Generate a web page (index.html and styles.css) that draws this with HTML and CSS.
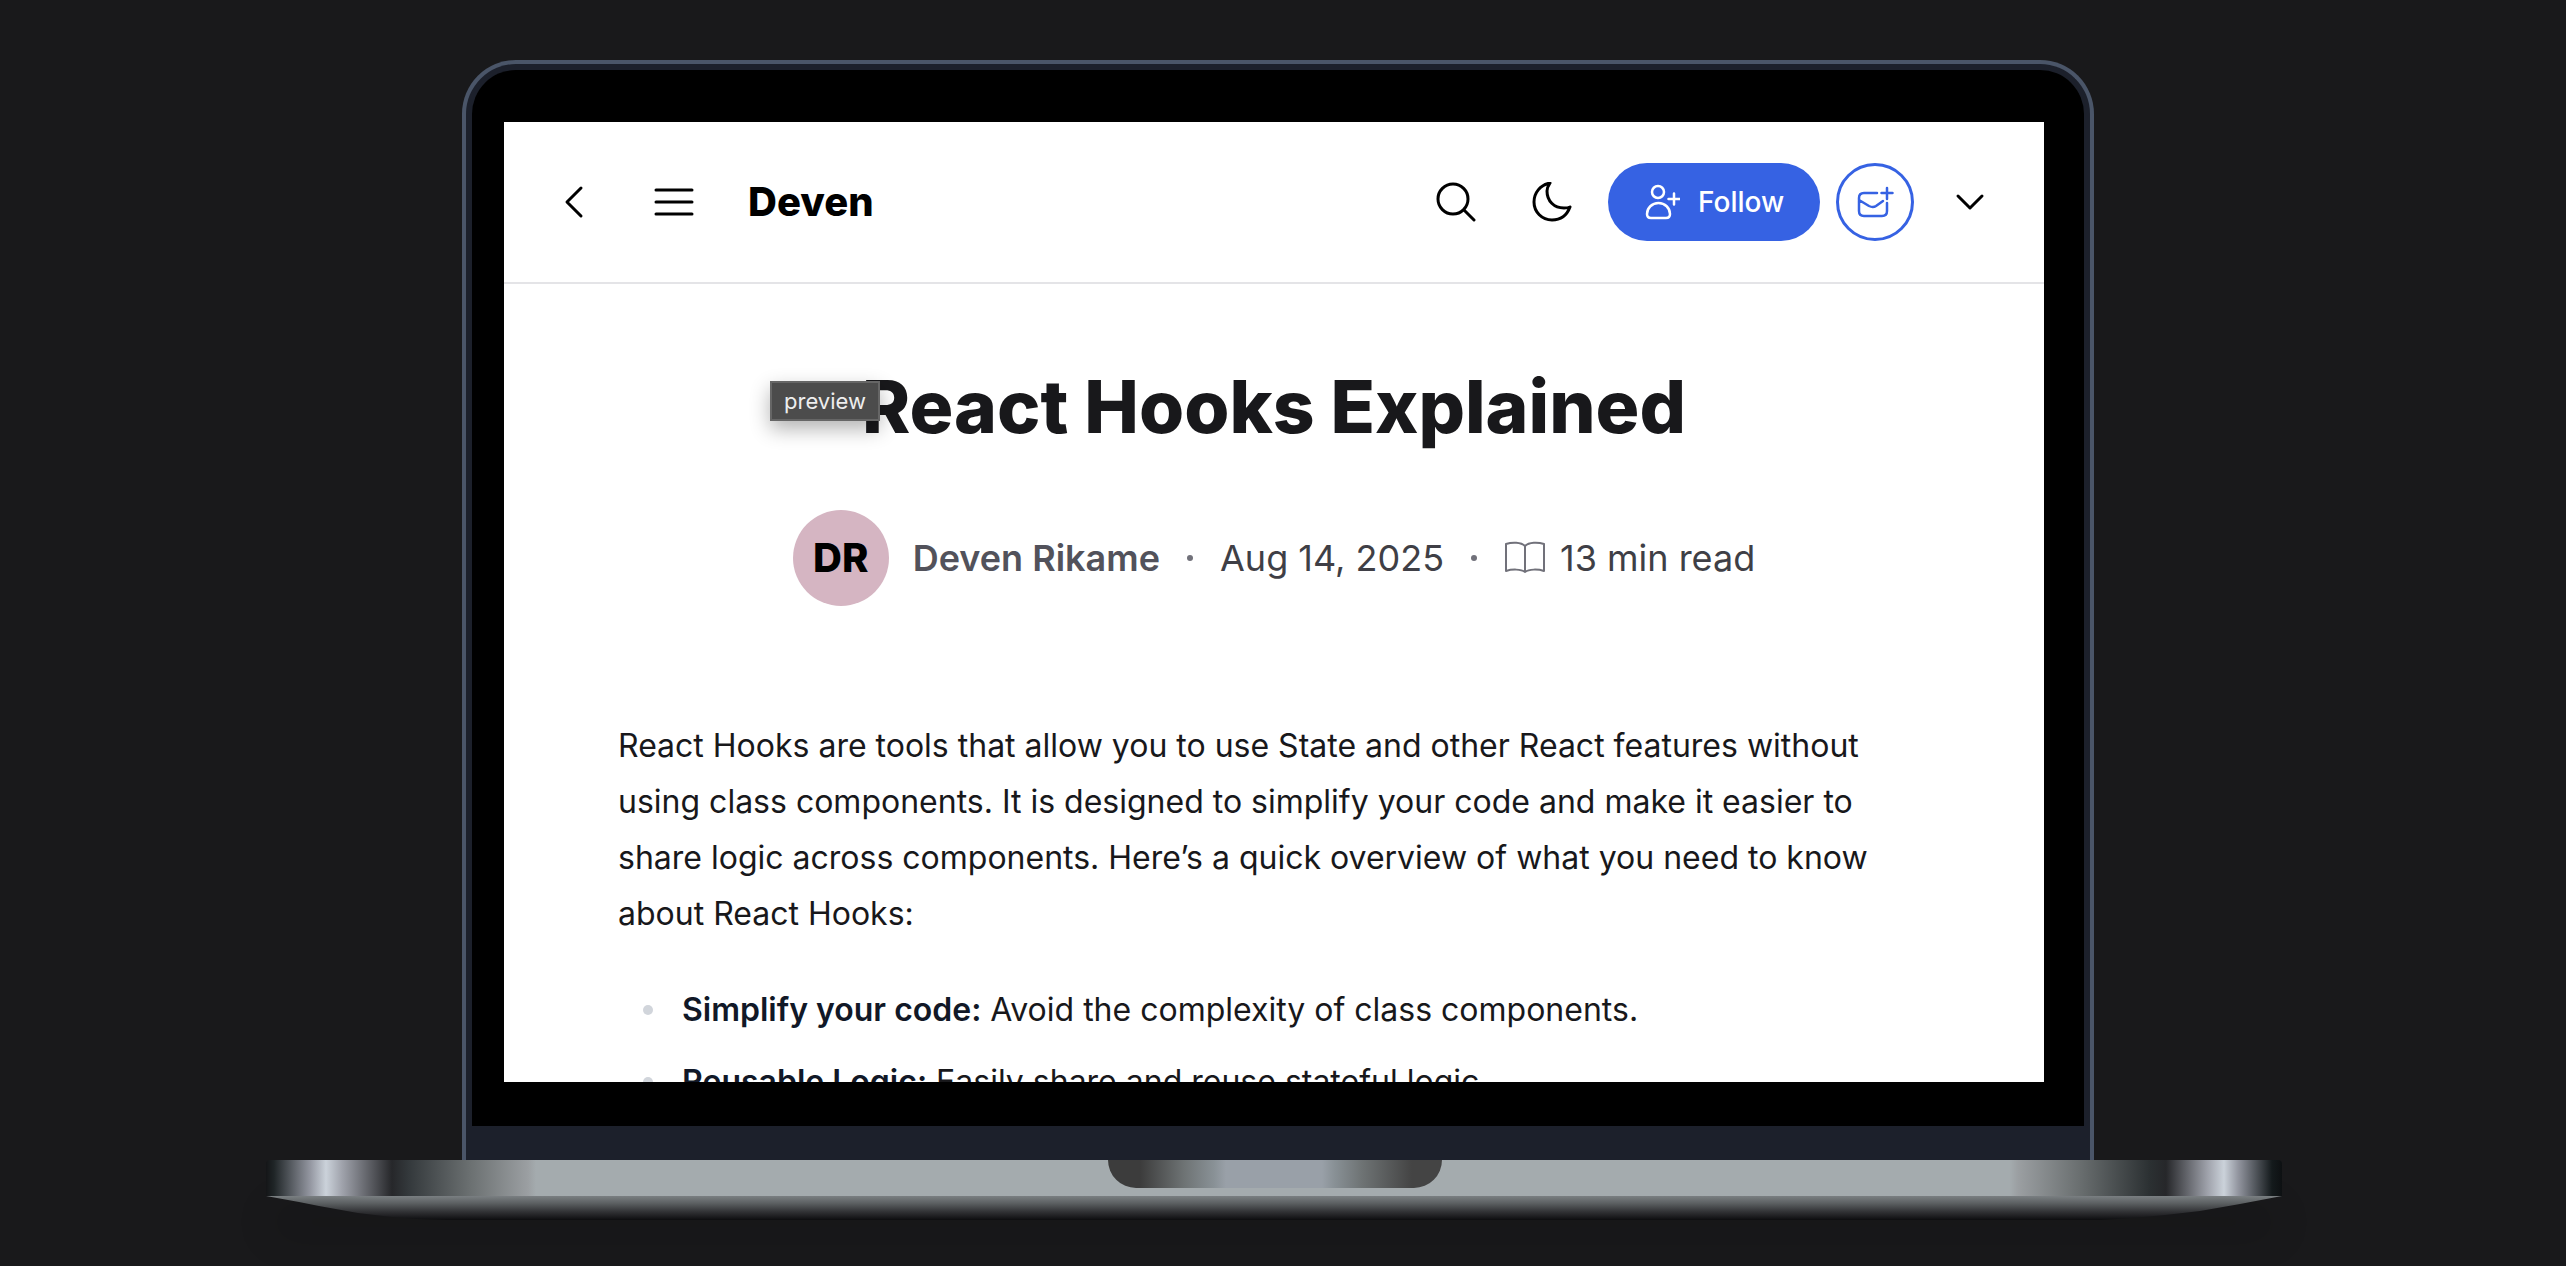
FILE: index.html
```html
<!DOCTYPE html>
<html lang="en">
<head>
<meta charset="utf-8">
<title>React Hooks Explained</title>
<link rel="stylesheet" href="styles.css">
</head>
<body>
<main class="stage">
  <div class="laptop">
    <div class="lid">
      <div class="bezel">
        <div class="screen">
          <header class="topbar">
            <div class="group nav-group">
              <button class="icon-button" type="button" aria-label="Back">
                <svg width="40" height="40" viewBox="0 0 40 40"><path d="M21 6 7 20l14 14"/></svg>
              </button>
              <button class="icon-button" type="button" aria-label="Menu">
                <svg width="40" height="40" viewBox="0 0 40 40"><path d="M2 8h36M2 20h36M2 32h36"/></svg>
              </button>
              <a class="brand" href="#">Deven</a>
            </div>
            <div class="group action-group">
              <button class="icon-button" type="button" aria-label="Search">
                <svg width="40" height="40" viewBox="0 0 40 40"><circle cx="17" cy="17" r="15"/><path d="m28 28 10 10"/></svg>
              </button>
              <button class="icon-button" type="button" aria-label="Dark mode">
                <svg width="40" height="40" viewBox="0 0 40 40"><path d="M18 1C8 3 2 11 2 20c0 10 8 18 18 18 9 0 15-5 18-13-2 1-4 1-6 1-10 0-17-7-17-17 0-3 1-5 3-8Z"/></svg>
              </button>
              <button class="follow" type="button">
                <svg width="36" height="36" viewBox="0 0 36 36"><g stroke-width="2.5"><circle cx="14" cy="8" r="6"/><path d="M7 34h15q4 0 4-4c0-6-5-11-11.500-11S3 24 3 30q0 4 4 4ZM30 9.500v11M24.500 15h11"/></g></svg>
                <span>Follow</span>
              </button>
              <button class="subscribe" type="button" aria-label="Subscribe by email">
                <svg width="38" height="36" viewBox="0 0 38 36"><path stroke-width="2.5" d="M21 9H8q-5 0-5 5v13q0 5 5 5h18q5 0 5-5v-8M3 16l10 6q4 2 7 0l7-5M31 4v11M25.500 9h11"/></svg>
              </button>
              <button class="icon-button" type="button" aria-label="More">
                <svg width="40" height="40" viewBox="0 0 40 40"><path d="m8 14 12 12 12-12"/></svg>
              </button>
            </div>
          </header>
          <article class="article">
            <div class="title-wrap">
              <h1>React Hooks Explained</h1>
              <span class="tooltip" role="tooltip">preview</span>
            </div>
            <div class="byline">
              <span class="avatar">DR</span>
              <a class="author" href="#">Deven Rikame</a>
              <span class="dot"></span>
              <time datetime="2025-08-14">Aug 14, 2025</time>
              <span class="dot"></span>
              <span class="read">
                <svg width="42" height="34" viewBox="0 0 42 34"><path d="M21 5C17 1 8 1 2 3v27c6-2 15-2 19 1 4-3 13-3 19-1V3C34 1 25 1 21 5v26"/></svg>
                13 min read
              </span>
            </div>
            <div class="prose">
              <p>React Hooks are tools that allow you to use State and other React features without using class components. It is designed to simplify your code and make it easier to share logic across components. Here’s a quick overview of what you need to know about React Hooks:</p>
              <ul>
                <li><strong>Simplify your code:</strong> Avoid the complexity of class components.</li>
                <li><strong>Reusable Logic:</strong> Easily share and reuse stateful logic.</li>
              </ul>
            </div>
          </article>
        </div>
      </div>
    </div>
    <div class="base"><div class="notch"></div></div>
    <div class="foot"></div>
  </div>
</main>
</body>
</html>
```
FILE: styles.css
```css
* { box-sizing: border-box; }

body {
  margin: 0;
  min-height: 100vh;
  background: #19191b;
  font-family: Inter, "Liberation Sans", sans-serif;
  color: #18181b;
  overflow: hidden;
}

button {
  padding: 0;
  border: 0;
  background: none;
  font: inherit;
  color: inherit;
}

a { color: inherit; text-decoration: none; }

svg {
  display: block;
  flex: none;
  fill: none;
  stroke: currentColor;
  stroke-width: 3;
  stroke-linecap: round;
  stroke-linejoin: round;
}

.stage { padding: 60px 284px 46px 266px; }

/* Laptop */
.laptop {
  display: flex;
  flex-direction: column;
}

.lid {
  margin: 0 188px 0 196px;
  padding: 6px 6px 34px;
  border: 4px solid #4a5568;
  border-bottom: 0;
  border-radius: 54px 54px 0 0;
  background: #1c202b;
}

.bezel {
  padding: 52px 40px 44px 32px;
  border-radius: 44px 44px 0 0;
  background: #000;
}

.screen {
  aspect-ratio: 77 / 48;
  overflow: hidden;
  background: #fff;
}

.base {
  height: 36px;
  border-radius: 4px 4px 0 0;
  background: linear-gradient(90deg,
    #141517 0, #1f2527 8px, #9396a0 44px, #cbd2da 60px, #a0a3ac 76px,
    #26272a 126px, #33383b 142px, #6b7071 204px, #9b9fa2 262px, #a4abae 270px,
    #a4abae calc(100% - 272px), #9b9fa2 calc(100% - 264px), #6b7071 calc(100% - 204px),
    #2b3032 calc(100% - 132px), #26272a calc(100% - 116px), #a0a3ac calc(100% - 74px),
    #cbd2da calc(100% - 58px), #9396a0 calc(100% - 44px), #141a1c calc(100% - 10px), #0d1012 100%);
  box-shadow: 0 44px 40px -8px rgba(0, 0, 0, 0.2);
}

.notch {
  width: 334px;
  height: 28px;
  margin-left: 842px;
  border-radius: 0 0 28px 28px;
  background: linear-gradient(90deg, #3c3c3c 32px, #6e7374 76px, #899196 106px, #99a0a8 118px, #99a0a8 214px, #899196 226px, #6e7374 254px, #444 304px);
}

/* Underside: shallow curve at both ends */
.foot {
  height: 24px;
  background: linear-gradient(#7a7f82, #5c6062 30%, #323336 65%, #0d0d0f);
  clip-path: polygon(0 0, 33px 6px, 53px 10px, 92px 17px, 126px 21px, 150px 23px, 180px 24px,
    calc(100% - 180px) 24px, calc(100% - 150px) 22px, calc(100% - 117px) 19px,
    calc(100% - 82px) 15px, calc(100% - 42px) 8px, 100% 0);
}

/* Header of the blog */
.topbar {
  display: flex;
  align-items: center;
  justify-content: space-between;
  height: 162px;
  padding: 0 34px 0 56px;
  border-bottom: 2px solid #e4e4e7;
  color: #000;
}

.group { display: flex; align-items: center; }
.nav-group { gap: 54px; }
.action-group { gap: 16px; }

.icon-button { width: 40px; height: 40px; }
.action-group .icon-button { margin: 0 20px; }

.brand {
  font-size: 40px;
  line-height: 48px;
  font-weight: 800;
}

.follow {
  display: flex;
  align-items: center;
  gap: 18px;
  width: 212px;
  height: 78px;
  padding: 0 36px;
  border-radius: 40px;
  background: #3662e3;
  color: #fff;
  font-size: 28px;
  line-height: 40px;
  font-weight: 500;
}

.subscribe {
  display: grid;
  place-items: center;
  width: 78px;
  height: 78px;
  border: 3px solid #3662e3;
  border-radius: 50%;
  color: #3662e3;
}

/* Article */
.article { padding-top: 78px; }

.title-wrap {
  position: relative;
  width: max-content;
  margin: 0 auto;
}

h1 {
  margin: 0;
  font-size: 73px;
  line-height: 90px;
  font-weight: 800;
}

.tooltip {
  position: absolute;
  top: 19px;
  left: -92px;
  padding: 0 12px;
  border: 2px solid #666;
  background: #4c4c4c;
  box-shadow: 0 8px 20px rgba(0, 0, 0, 0.3);
  color: #eee;
  font-size: 22px;
  line-height: 36px;
}

.byline {
  display: flex;
  align-items: center;
  justify-content: center;
  gap: 27px;
  margin-top: 58px;
  font-size: 36px;
  line-height: 48px;
  color: #3f3f46;
}

.avatar {
  display: grid;
  place-items: center;
  width: 96px;
  height: 96px;
  margin-right: -3px;
  border-radius: 50%;
  background: #d5b5c2;
  color: #000;
  font-size: 40px;
  font-weight: 800;
}

.author { color: #52525b; font-weight: 600; }

.dot {
  width: 6px;
  height: 6px;
  border-radius: 50%;
  background: #71717a;
}

.read { display: flex; align-items: center; gap: 14px; }
.read svg { color: #71717a; stroke-width: 2; }

.prose {
  max-width: 1312px;
  margin: 112px auto 0;
  font-size: 32px;
  line-height: 56px;
}

.prose p { margin: 0; }

.prose ul {
  margin: 40px 0 0;
  padding: 0;
  list-style: none;
}

.prose li {
  display: flex;
  align-items: center;
  gap: 9px;
  margin-bottom: 16px;
  padding-left: 25px;
}

.prose li::before {
  content: "";
  width: 10px;
  height: 10px;
  margin-right: 20px;
  border-radius: 50%;
  background: #d1d5db;
}

.prose strong { color: #111827; font-weight: 600; }
```
